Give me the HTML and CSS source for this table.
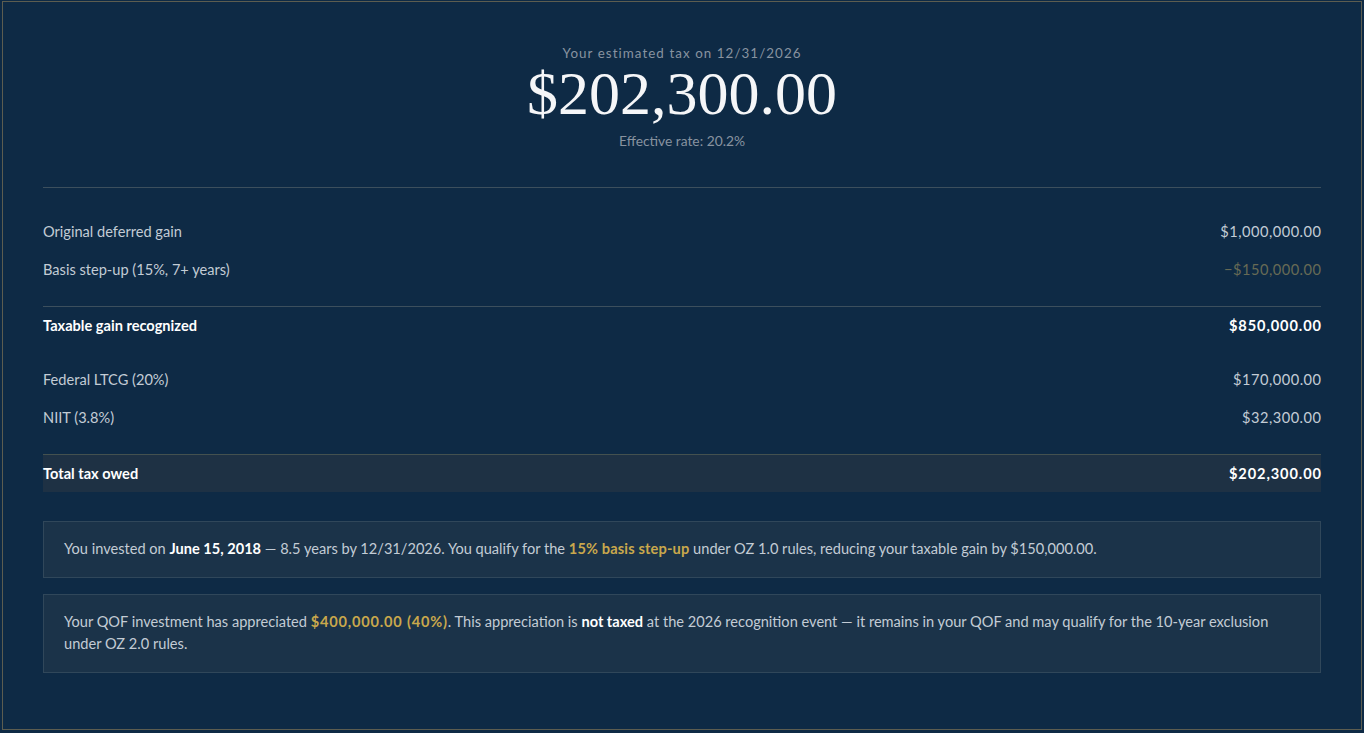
FILE: index.html
```html
<!DOCTYPE html>
<html lang="en">
<head>
<meta charset="utf-8">
<title>Estimated tax</title>
<link rel="stylesheet" href="styles.css">
</head>
<body>
<div class="frame">
  <header class="summary">
    <div class="eyebrow">Your estimated tax on 12/31/2026</div>
    <div class="amount">$202,300.00</div>
    <div class="rate">Effective rate: 20.2%</div>
  </header>

  <section class="breakdown">
    <div class="row"><span>Original deferred gain</span><span class="num">$1,000,000.00</span></div>
    <div class="row"><span>Basis step-up (15%, 7+ years)</span><span class="num neg">&minus;$150,000.00</span></div>
    <div class="row subtotal"><span>Taxable gain recognized</span><span class="num">$850,000.00</span></div>
    <div class="row gap"><span>Federal LTCG (20%)</span><span class="num">$170,000.00</span></div>
    <div class="row"><span>NIIT (3.8%)</span><span class="num">$32,300.00</span></div>
    <div class="row total"><span>Total tax owed</span><span class="num">$202,300.00</span></div>
  </section>

  <div class="note first">You invested on <strong>June 15, 2018</strong> — 8.5 years by 12/31/2026. You qualify for the <strong class="gold">15% basis step-up</strong> under OZ 1.0 rules, reducing your taxable gain by $150,000.00.</div>
  <div class="note">Your QOF investment has appreciated <strong class="gold num">$400,000.00 (40%)</strong>. This appreciation is <strong>not taxed</strong> at the 2026 recognition event — it remains in your QOF and may qualify for the 10-year exclusion under OZ 2.0 rules.</div>
</div>
</body>
</html>
```

FILE: styles.css
```css
* { box-sizing: border-box; }
html, body { margin: 0; padding: 0; }
body {
  background: #0e2a45;
  font-family: "Lato", "Liberation Sans", sans-serif;
  color: #c3ccd5;
  font-size: 14.6px;
}
.frame {
  margin: 1px 2px 3px 2px;
  height: 729px;
  border: 1px solid #5c5d50;
  padding: 0 40px;
  background: #0e2a45;
}
.summary {
  text-align: center;
  padding-top: 42px;
  height: 186px;
  border-bottom: 1px solid #3c4f5d;
}
.eyebrow {
  font-size: 13.4px;
  letter-spacing: 1.05px;
  color: #8893a0;
  line-height: 18px;
}
.amount {
  font-family: "Liberation Serif", serif;
  font-size: 62px;
  line-height: 66px;
  color: #f5f6f8;
  margin-top: -2px;
}
.rate {
  font-size: 13.8px;
  color: #8893a0;
  line-height: 18px;
  margin-top: 6px;
}
.breakdown { padding-top: 24px; }
.row {
  display: flex;
  justify-content: space-between;
  align-items: center;
  height: 38px;
  color: #c3ccd5;
}
.row .num {
  letter-spacing: 0.5px;
  margin-right: -0.5px;
}
.neg { color: #676a55; }
.subtotal {
  margin-top: 18px;
  border-top: 1px solid #3c4f5d;
  color: #ffffff;
  font-weight: 700;
}
.subtotal .num, .total .num {
  letter-spacing: 0.9px;
  margin-right: -0.9px;
}
.gap { margin-top: 16px; }
.total {
  margin-top: 18px;
  border-top: 1px solid #44514f;
  background: #1e3144;
  color: #ffffff;
  font-weight: 700;
}
.note {
  background: #1b3349;
  border: 1px solid #30475a;
  padding: 16px 20px 17px;
  line-height: 22px;
  color: #c3ccd5;
  margin-top: 16px;
}
.note.first { margin-top: 29px; }
.note strong { color: #ffffff; font-weight: 700; }
.note strong.gold { color: #c9a84c; letter-spacing: 0.15px; }
.note strong.num { letter-spacing: 0.8px; }
```
